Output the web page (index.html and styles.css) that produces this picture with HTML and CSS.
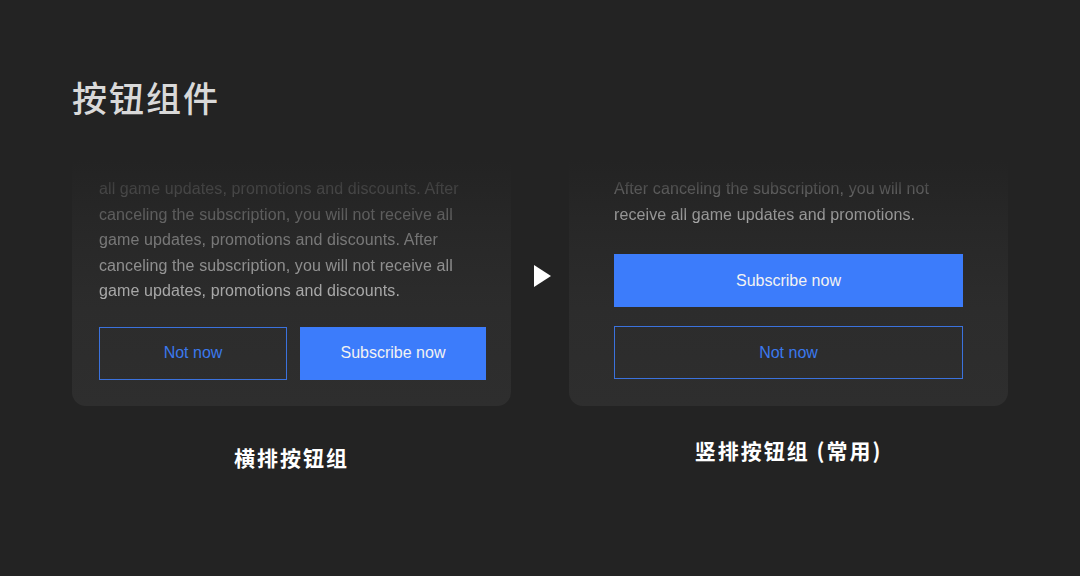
FILE: index.html
```html
<!DOCTYPE html>
<html lang="zh">
<head>
<meta charset="utf-8">
<link rel="stylesheet" href="styles.css">
</head>
<body>
<main class="page">
  <h1 class="title">按钮组件</h1>
  <div class="row">
    <section class="col">
      <div class="card card-h">
        <p class="text text-h">all game updates, promotions and discounts. After canceling the subscription, you will not receive all game updates, promotions and discounts. After canceling the subscription, you will not receive all game updates, promotions and discounts.</p>
        <div class="btns-h">
          <button class="btn btn-outline">Not now</button>
          <button class="btn btn-primary">Subscribe now</button>
        </div>
      </div>
      <div class="caption caption-h">横排按钮组</div>
    </section>
    <div class="arrow">
      <svg width="17" height="22" viewBox="0 0 17 22"><polygon points="0,0 17,11 0,22" fill="#ffffff"/></svg>
    </div>
    <section class="col">
      <div class="card card-v">
        <p class="text text-v">After canceling the subscription, you will not receive all game updates and promotions.</p>
        <div class="btns-v">
          <button class="btn btn-primary">Subscribe now</button>
          <button class="btn btn-outline">Not now</button>
        </div>
      </div>
      <div class="caption caption-v">竖排按钮组 (常用)</div>
    </section>
  </div>
</main>
</body>
</html>
```
FILE: styles.css
```css
html, body {
  margin: 0;
  padding: 0;
  background: #232323;
}
body {
  width: 1080px;
  height: 576px;
  overflow: hidden;
  font-family: "Liberation Sans", Arial, "Noto Sans CJK SC", sans-serif;
}
.page {
  padding: 79px 72px 0;
}
.title {
  margin: 0;
  font-family: "Noto Sans CJK SC", sans-serif;
  font-size: 35px;
  line-height: 35px;
  font-weight: 500;
  color: #d9d9d9;
  letter-spacing: 2px;
}
.row {
  display: flex;
  margin-top: 46px;
}
.col {
  width: 439px;
  display: flex;
  flex-direction: column;
}
.arrow {
  width: 58px;
  display: flex;
  justify-content: center;
  padding-top: 105px;
  padding-left: 4px;
  box-sizing: border-box;
}
.arrow svg {
  display: block;
}
.card {
  height: 246px;
  box-sizing: border-box;
  border-radius: 0 0 14px 14px;
  background: linear-gradient(180deg, #232323 0%, #282828 30%, #2c2c2c 60%, #2e2e2e 100%);
  padding-top: 16px;
}
.card-h {
  padding-left: 27px;
  padding-right: 25px;
}
.card-v {
  padding-left: 45px;
  padding-right: 45px;
}
.text {
  margin: 0;
  font-size: 16px;
  line-height: 25.5px;
  letter-spacing: 0.1px;
  color: #b3b3b3;
}
.text-h {
  -webkit-mask-image: linear-gradient(180deg, rgba(0,0,0,0.12) 0%, rgba(0,0,0,1) 100%);
  mask-image: linear-gradient(180deg, rgba(0,0,0,0.12) 0%, rgba(0,0,0,1) 100%);
}
.text-v {
  -webkit-mask-image: linear-gradient(180deg, rgba(0,0,0,0.1) 0%, rgba(0,0,0,1) 100%);
  mask-image: linear-gradient(180deg, rgba(0,0,0,0.1) 0%, rgba(0,0,0,1) 100%);
}
.btns-h {
  display: flex;
  gap: 13px;
  margin-top: 23px;
}
.btns-h .btn {
  flex: 1;
}
.btns-v {
  display: flex;
  flex-direction: column;
  gap: 19px;
  margin-top: 27px;
}
.btn {
  height: 53px;
  margin: 0;
  border-radius: 0;
  font-family: "Liberation Sans", Arial, sans-serif;
  font-size: 16px;
  box-sizing: border-box;
  cursor: pointer;
}
.btn-primary {
  background: #3c7cfb;
  border: none;
  color: #f2f2f2;
}
.btn-outline {
  background: transparent;
  border: 1.5px solid #3b72dd;
  color: #3b79ee;
}
.caption {
  font-family: "Noto Sans CJK SC", sans-serif;
  font-size: 21px;
  font-weight: 700;
  color: #ffffff;
  text-align: center;
  letter-spacing: 2px;
  line-height: 28px;
}
.caption-h {
  margin-top: 37px;
}
.caption-v {
  margin-top: 30px;
}
```
